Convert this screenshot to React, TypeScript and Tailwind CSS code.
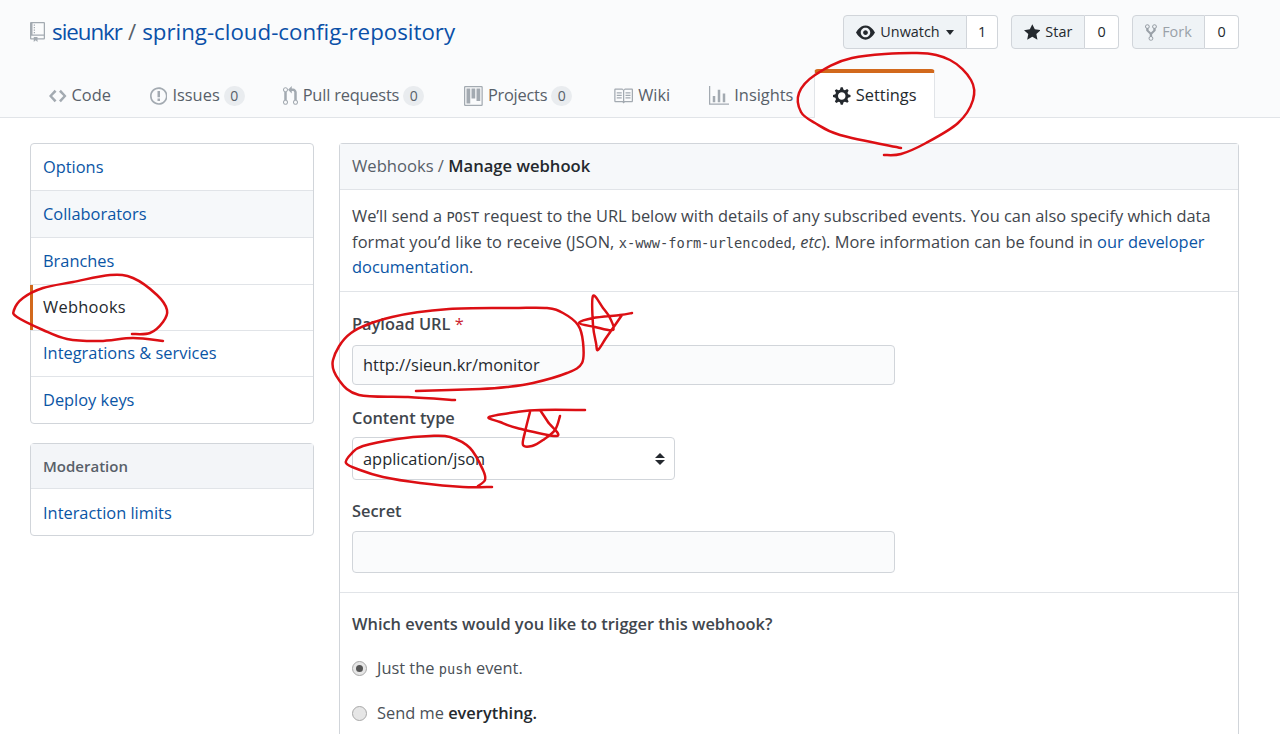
import React from 'react';

const FONT = "font-['Open_Sans','Noto_Sans',sans-serif]";
const MONO = "font-['DejaVu_Sans_Mono',monospace] text-[13.7px] leading-none";

const ICONS: Record<string, { w: number; d: string }> = {
  repo: { w: 12, d: 'M4 9H3V8h1v1zm0-3H3v1h1V6zm0-2H3v1h1V4zm0-2H3v1h1V2zm8-1v12c0 .55-.45 1-1 1H6v2l-1.5-1.5L3 16v-2H1c-.55 0-1-.45-1-1V1c0-.55.45-1 1-1h10c.55 0 1 .45 1 1zm-1 10H1v2h2v-1h3v1h5v-2zm0-10H2v9h9V1z' },
  code: { w: 14, d: 'M9.5 3L8 4.5 11.5 8 8 11.5 9.5 13 14 8 9.5 3zm-5 0L0 8l4.5 5L6 11.5 2.5 8 6 4.5 4.5 3z' },
  issue: { w: 14, d: 'M7 2.3c3.14 0 5.7 2.56 5.7 5.7s-2.56 5.7-5.7 5.7A5.71 5.71 0 0 1 1.3 8c0-3.14 2.56-5.7 5.7-5.7zM7 1C3.14 1 0 4.14 0 8s3.14 7 7 7 7-3.14 7-7-3.14-7-7-7zm1 3H6v5h2V4zm0 6H6v2h2v-2z' },
  pull: { w: 12, d: 'M11 11.28V5c-.03-.78-.34-1.47-.94-2.06C9.46 2.35 8.78 2.03 8 2H7V0L4 3l3 3V4h1c.27.02.48.11.69.31.21.2.3.42.31.69v6.28A1.993 1.993 0 0 0 10 15a1.993 1.993 0 0 0 1-3.72zm-1 2.92c-.66 0-1.2-.55-1.2-1.2 0-.65.55-1.2 1.2-1.2.65 0 1.2.55 1.2 1.2 0 .65-.55 1.2-1.2 1.2zM4 3c0-1.11-.89-2-2-2a1.993 1.993 0 0 0-1 3.72v6.56A1.993 1.993 0 0 0 2 15a1.993 1.993 0 0 0 1-3.72V4.72c.59-.34 1-.98 1-1.72zm-.8 10c0 .66-.55 1.2-1.2 1.2-.65 0-1.2-.55-1.2-1.2 0-.65.55-1.2 1.2-1.2.65 0 1.2.55 1.2 1.2zM2 4.2C1.34 4.2.8 3.65.8 3c0-.65.55-1.2 1.2-1.2.65 0 1.2.55 1.2 1.2 0 .65-.55 1.2-1.2 1.2z' },
  project: { w: 15, d: 'M10 12h3V2h-3v10zm-4-2h3V2H6v8zm-4 4h3V2H2v12zm-1 1h13V1H1v14zM14 0H1a1 1 0 0 0-1 1v14a1 1 0 0 0 1 1h13a1 1 0 0 0 1-1V1a1 1 0 0 0-1-1z' },
  book: { w: 16, d: 'M3 5h4v1H3V5zm0 3h4V7H3v1zm0 2h4V9H3v1zm11-5h-4v1h4V5zm0 2h-4v1h4V7zm0 2h-4v1h4V9zm2-6v9c0 .55-.45 1-1 1H9.5l-1 1-1-1H2c-.55 0-1-.45-1-1V3c0-.55.45-1 1-1h5.5l1 1 1-1H15c.55 0 1 .45 1 1zm-8 .5L7.5 3H2v9h6V3.5zm7-.5H9.5l-.5.5V12h6V3z' },
  graph: { w: 16, d: 'M16 14v1H0V0h1v14h15zM5 13H3V8h2v5zm4 0H7V3h2v10zm4 0h-2V6h2v7z' },
  gear: { w: 14, d: 'M14 8.77v-1.6l-1.94-.64-.45-1.09.88-1.84-1.13-1.13-1.81.91-1.09-.45-.69-1.92h-1.6l-.63 1.94-1.11.45-1.84-.88-1.13 1.13.91 1.81-.45 1.09L0 7.23v1.59l1.94.64.45 1.09-.88 1.84 1.13 1.13 1.81-.91 1.09.45.69 1.92h1.59l.63-1.94 1.11-.45 1.84.88 1.13-1.13-.92-1.81.47-1.09L14 8.75v.02zM7 11c-1.66 0-3-1.34-3-3s1.34-3 3-3 3 1.34 3 3-1.34 3-3 3z' },
  eye: { w: 16, d: 'M8.06 2C3 2 0 8 0 8s3 6 8.06 6C13 14 16 8 16 8s-3-6-7.94-6zM8 12c-2.2 0-4-1.78-4-4 0-2.2 1.8-4 4-4 2.22 0 4 1.8 4 4 0 2.22-1.78 4-4 4zm2-4c0 1.11-.89 2-2 2-1.11 0-2-.89-2-2 0-1.11.89-2 2-2 1.11 0 2 .89 2 2z' },
  star: { w: 14, d: 'M14 6l-4.9-.64L7 1 4.9 5.36 0 6l3.6 3.26L2.67 14 7 11.67 11.33 14l-.93-4.74L14 6z' },
  fork: { w: 10, d: 'M8 1a1.993 1.993 0 0 0-1 3.72V6L5 8 3 6V4.72A1.993 1.993 0 0 0 2 1a1.993 1.993 0 0 0-1 3.72V6.5l3 3v1.78A1.993 1.993 0 0 0 5 15a1.993 1.993 0 0 0 1-3.72V9.5l3-3V4.72A1.993 1.993 0 0 0 8 1zM2 4.2C1.34 4.2.8 3.65.8 3c0-.65.55-1.2 1.2-1.2.65 0 1.2.55 1.2 1.2 0 .65-.55 1.2-1.2 1.2zm3 10c-.66 0-1.2-.55-1.2-1.2 0-.65.55-1.2 1.2-1.2.65 0 1.2.55 1.2 1.2 0 .65-.55 1.2-1.2 1.2zm3-10c-.66 0-1.2-.55-1.2-1.2 0-.65.55-1.2 1.2-1.2.65 0 1.2.55 1.2 1.2 0 .65-.55 1.2-1.2 1.2z' },
};

function Octicon({ name, h = 20, className }: { name: string; h?: number; className?: string }) {
  const icon = ICONS[name];
  return (
    <svg viewBox={`0 0 ${icon.w} 16`} width={(icon.w * h) / 16} height={h} className={className} fill="currentColor">
      <path fillRule="evenodd" d={icon.d} />
    </svg>
  );
}

function Count({ n }: { n: number }) {
  return <span className="ml-[4px] flex h-[20px] w-[21px] items-center justify-center rounded-full bg-[#e9ecef] text-[14px] text-[#586069]">{n}</span>;
}

function Tab({ icon, label, count, w }: { icon: string; label: string; count?: number; w: string }) {
  return (
    <a className={`flex h-[53px] items-center text-[16.4px] text-[#586069] ${w}`}>
      <Octicon name={icon} h={20} className="mr-[5px] text-[#a3aab1]" />
      {label}
      {count !== undefined && <Count n={count} />}
    </a>
  );
}

function HeadButton({ icon, label, n, caret, muted, w, cw }: { icon: string; label: string; n: number; caret?: boolean; muted?: boolean; w: string; cw: string }) {
  return (
    <div className="flex h-[34px] text-[14.4px]">
      <div className={`flex items-center justify-center gap-[5px] rounded-l-[4px] border border-[#d1d5da] bg-[#eff3f6] ${w} ${muted ? 'text-[#9aa1a8]' : 'text-[#24292e]'}`}>
        <Octicon name={icon} h={19} />
        {label}
        {caret && <span className="ml-[1px] border-x-[4.5px] border-t-[5px] border-x-transparent border-t-[#24292e]" />}
      </div>
      <div className={`flex items-center justify-center rounded-r-[4px] border border-l-0 border-[#d1d5da] bg-white text-[#24292e] ${cw}`}>{n}</div>
    </div>
  );
}

function MenuItem({ label, active, hover, h }: { label: string; active?: boolean; hover?: boolean; h: string }) {
  return (
    <a className={`relative flex items-center border-b border-[#e1e4e8] px-[12px] last:border-b-0 ${h} ${active ? 'tracking-[0.3px] text-[#24292e]' : 'text-[#0a55a5]'} ${hover ? 'bg-[#f6f8fa]' : ''}`}>
      {active && <span className="absolute -left-px top-0 h-full w-[3px] bg-[#d2691c]" />}
      {label}
    </a>
  );
}

// catmull-rom through the hand-drawn points
function smooth(pts: number[][]) {
  let d = `M${pts[0][0]} ${pts[0][1]}`;
  for (let i = 0; i < pts.length - 1; i++) {
    const p0 = pts[i - 1] || pts[i];
    const p1 = pts[i];
    const p2 = pts[i + 1];
    const p3 = pts[i + 2] || p2;
    d += ` C${p1[0] + (p2[0] - p0[0]) / 6} ${p1[1] + (p2[1] - p0[1]) / 6} ${p2[0] - (p3[0] - p1[0]) / 6} ${p2[1] - (p3[1] - p1[1]) / 6} ${p2[0]} ${p2[1]}`;
  }
  return d;
}

const SCRIBBLES = [
  // settings
  [[901,148],[840,135],[815,123],[801,112],[799,93],[815,75],[852,58],[917,53],[950,60],[971,80],[973,100],[958,123],[926,143],[901,154],[884,155]],
  // webhooks
  [[163,341],[133,338],[100,341],[67,339],[43,330],[17,317],[14,310],[23,298],[43,288],[73,282],[110,275],[133,278],[157,295],[167,310],[163,322],[150,333],[132,334]],
  // payload url
  [[455,400],[408,397],[359,395],[339,380],[333,360],[351,333],[392,317],[449,309],[513,308],[547,308],[563,313],[578,325],[583,342],[582,363],[567,373],[533,383],[507,387],[480,389],[416,391]],
  // application/json
  [[492,487],[463,487],[420,483],[383,477],[360,470],[346,463],[352,453],[363,446],[397,439],[430,436],[450,437],[470,448],[483,470],[485,480],[478,486]],
  // star next to payload url
  [[632,313],[620,315],[593,318],[579,323],[595,327],[613,330],[610,318],[603,308],[593,296],[593,325],[596,343],[598,350],[606,338],[613,328],[622,315]],
  // star next to content type
  [[585,410],[540,410],[517,412],[489,417],[500,422],[517,428],[557,436],[548,422],[540,410]],
  [[530,412],[525,432],[523,445],[532,446],[543,440],[555,430],[560,416]],
];

export default function App() {
  return (
    <div className={`relative h-[734px] w-[1280px] overflow-hidden bg-white text-[16.4px] text-[#24292e] ${FONT}`}>
      <header className="h-[118px] border-b border-[#e1e4e8] bg-[#fafbfc]">
        <div className="flex items-start justify-between pl-[30px] pr-[41px] pt-[15px]">
          <h1 className="flex h-[34px] items-center text-[22.3px] text-[#586069]">
            <Octicon name="repo" h={20} className="mr-[7px] text-[#a3aab1]" />
            <a className="tracking-[-1px] text-[#0a50a8]">sieunkr</a>
            <span className="mx-[6px] text-[#586069]">/</span>
            <a className="text-[#0a50a8]">spring-cloud-config-repository</a>
          </h1>
          <div className="flex gap-[13px]">
            <HeadButton icon="eye" label="Unwatch" n={1} caret w="w-[124px]" cw="w-[31px]" />
            <HeadButton icon="star" label="Star" n={0} w="w-[74px]" cw="w-[34px]" />
            <HeadButton icon="fork" label="Fork" n={0} muted w="w-[73px]" cw="w-[34px]" />
          </div>
        </div>
        <nav className="mt-[20px] flex items-start pl-[49px]">
          <Tab icon="code" label="Code" w="mr-[39px]" />
          <Tab icon="issue" label="Issues" count={0} w="mr-[38px]" />
          <Tab icon="pull" label="Pull requests" count={0} w="mr-[40px] tracking-[-0.2px]" />
          <Tab icon="project" label="Projects" count={0} w="mr-[41px] tracking-[-0.25px]" />
          <Tab icon="book" label="Wiki" w="mr-[39px]" />
          <Tab icon="graph" label="Insights" w="mr-[21px]" />
          <a className="flex h-[49px] w-[121px] items-center justify-center rounded-t-[4px] border-x border-t-[4px] border-x-[#e1e4e8] border-t-[#d2691c] bg-white text-[16.4px] text-[#24292e]">
            <Octicon name="gear" h={20} className="mr-[5px]" />
            Settings
          </a>
        </nav>
      </header>

      <div className="flex h-[616px] gap-[25px] px-[30px] pt-[25px]">
        <aside className="w-[284px] shrink-0">
          <div className="rounded-[4px] border border-[#d1d5da]">
            <MenuItem label="Options" h="h-[47px]" />
            <MenuItem label="Collaborators" hover h="h-[47px]" />
            <MenuItem label="Branches" h="h-[47px]" />
            <MenuItem label="Webhooks" active h="h-[46px]" />
            <MenuItem label="Integrations & services" h="h-[46px]" />
            <MenuItem label="Deploy keys" h="h-[46px]" />
          </div>
          <div className="mt-[19px] rounded-[4px] border border-[#d1d5da]">
            <div className="flex h-[45px] items-center border-b border-[#e1e4e8] bg-[#f3f5f8] px-[12px] text-[15px] font-semibold text-[#586069]">Moderation</div>
            <MenuItem label="Interaction limits" h="h-[46px] pt-[2px]" />
          </div>
        </aside>

        <main className="w-[900px] shrink-0 rounded-t-[4px] border-x border-t border-[#d1d5da]">
          <div className="flex h-[46px] items-center border-b border-[#e1e4e8] bg-[#f6f8fa] px-[12px] text-[16.6px] text-[#586069]">
            Webhooks /&nbsp;<strong className="font-semibold text-[#24292e]">Manage webhook</strong>
          </div>
          <p className="h-[102px] border-b border-[#e1e4e8] px-[12px] pt-[13px] leading-[25.5px] text-[#3f464d]">
            We’ll send a <code className={MONO}>POST</code> request to the URL below with details of any subscribed events. You can also specify which data <span className="tracking-[0.12px]">format you’d like to receive (JSON,</span> <code className={MONO}>x-www-form-urlencoded</code>, <em>etc</em>). More information can be found in <a className="text-[#0a55a5]">our developer documentation</a>.
          </p>
          <section className="h-[301px] border-b border-[#e1e4e8] px-[12px] pt-[20px]">
            <label className="block h-[33px] font-semibold leading-[24px] text-[#3f464d]">Payload URL <span className="font-normal text-[#cb2431]">*</span></label>
            <div className="flex h-[40px] w-[543px] items-center rounded-[4px] border border-[#d1d5da] bg-[#fafbfc] px-[10px]">http://sieun.kr/monitor</div>
            <label className="mt-[21px] block h-[31px] font-semibold leading-[24px] text-[#3f464d]">Content type</label>
            <div className="flex h-[43px] w-[323px] items-center justify-between rounded-[4px] border border-[#d1d5da] bg-white pl-[10px] pr-[9px] pt-[1px]">
              application/json
              <span className="flex flex-col gap-[2px]">
                <span className="border-x-[5px] border-b-[5px] border-x-transparent border-b-[#24292e]" />
                <span className="border-x-[5px] border-t-[5px] border-x-transparent border-t-[#24292e]" />
              </span>
            </div>
            <label className="mt-[19px] block h-[32px] font-semibold leading-[24px] text-[#3f464d]">Secret</label>
            <div className="h-[42px] w-[543px] rounded-[4px] border border-[#d1d5da] bg-[#fafbfc]" />
          </section>
          <section className="px-[12px] pt-[19px]">
            <div className="font-semibold leading-[24px] text-[#3f464d]">Which events would you like to trigger this webhook?</div>
            <div className="mt-[20px] flex items-center gap-[10px] leading-[24px] text-[#4b5157]">
              <span className="flex h-[15px] w-[15px] items-center justify-center rounded-full border border-[#a8a8a8] bg-[#e6e6e6]">
                <span className="h-[7px] w-[7px] rounded-full bg-[#555555]" />
              </span>
              <span>Just the <code className={MONO}>push</code> event.</span>
            </div>
            <div className="mt-[21px] flex items-center gap-[10px] leading-[24px] text-[#4b5157]">
              <span className="h-[15px] w-[15px] rounded-full border border-[#a8a8a8] bg-[#e6e6e6]" />
              <span>Send me <strong className="font-semibold text-[#24292e]">everything.</strong></span>
            </div>
          </section>
        </main>
      </div>

      <svg className="pointer-events-none absolute inset-0" width={1280} height={734} fill="none" stroke="#dc0f14" strokeWidth={2.5} strokeLinecap="round" strokeLinejoin="round">
        {SCRIBBLES.map((pts, i) => <path key={i} d={smooth(pts)} />)}
      </svg>
    </div>
  );
}
